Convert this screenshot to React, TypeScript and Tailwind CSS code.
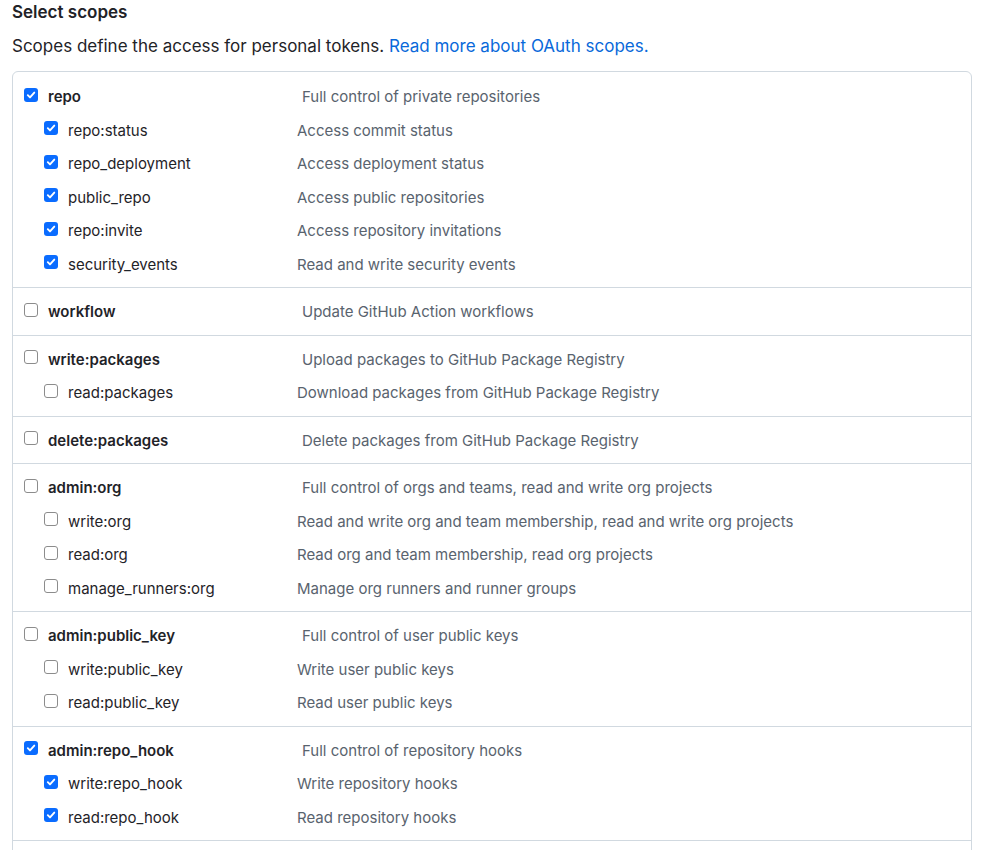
import React from "react";

interface Scope {
  name: string;
  desc: string;
  checked: boolean;
}

interface ScopeGroup {
  parent: Scope;
  children: Scope[];
}

const groups: ScopeGroup[] = [
  {
    parent: { name: "repo", desc: "Full control of private repositories", checked: true },
    children: [
      { name: "repo:status", desc: "Access commit status", checked: true },
      { name: "repo_deployment", desc: "Access deployment status", checked: true },
      { name: "public_repo", desc: "Access public repositories", checked: true },
      { name: "repo:invite", desc: "Access repository invitations", checked: true },
      { name: "security_events", desc: "Read and write security events", checked: true },
    ],
  },
  {
    parent: { name: "workflow", desc: "Update GitHub Action workflows", checked: false },
    children: [],
  },
  {
    parent: { name: "write:packages", desc: "Upload packages to GitHub Package Registry", checked: false },
    children: [{ name: "read:packages", desc: "Download packages from GitHub Package Registry", checked: false }],
  },
  {
    parent: { name: "delete:packages", desc: "Delete packages from GitHub Package Registry", checked: false },
    children: [],
  },
  {
    parent: { name: "admin:org", desc: "Full control of orgs and teams, read and write org projects", checked: false },
    children: [
      { name: "write:org", desc: "Read and write org and team membership, read and write org projects", checked: false },
      { name: "read:org", desc: "Read org and team membership, read org projects", checked: false },
      { name: "manage_runners:org", desc: "Manage org runners and runner groups", checked: false },
    ],
  },
  {
    parent: { name: "admin:public_key", desc: "Full control of user public keys", checked: false },
    children: [
      { name: "write:public_key", desc: "Write user public keys", checked: false },
      { name: "read:public_key", desc: "Read user public keys", checked: false },
    ],
  },
  {
    parent: { name: "admin:repo_hook", desc: "Full control of repository hooks", checked: true },
    children: [
      { name: "write:repo_hook", desc: "Write repository hooks", checked: true },
      { name: "read:repo_hook", desc: "Read repository hooks", checked: true },
    ],
  },
  {
    parent: { name: "admin:org_hook", desc: "Full control of organization hooks", checked: false },
    children: [],
  },
  {
    parent: { name: "gist", desc: "Create gists", checked: false },
    children: [],
  },
];

function Checkbox({ checked }: { checked: boolean }) {
  if (checked) {
    return (
      <span className="flex h-[14px] w-[14px] shrink-0 items-center justify-center rounded-[3px] bg-[#0a6cff]">
        <svg width="10" height="10" viewBox="0 0 10 10" fill="none">
          <path d="M1.8 5.2 L4 7.4 L8.3 2.6" stroke="white" strokeWidth="1.9" strokeLinecap="round" strokeLinejoin="round" />
        </svg>
      </span>
    );
  }
  return <span className="block h-[14px] w-[14px] shrink-0 rounded-[3px] border border-[#8c8c8c] bg-white" />;
}

function ScopeRow({ scope, child }: { scope: Scope; child?: boolean }) {
  return (
    <div className={`flex h-[33.5px] items-center ${child ? "pl-[31px]" : "pl-[11px]"}`}>
      <span className="-mt-[5px]">
        <Checkbox checked={scope.checked} />
      </span>
      <span
        className={`ml-[10px] shrink-0 ${child ? "w-[229px] font-normal" : "w-[254px] font-semibold"} text-[#1f2328]`}
      >
        {scope.name}
      </span>
      <span className="text-[#59636e]">{scope.desc}</span>
    </div>
  );
}

export default function App() {
  return (
    <div className="bg-white pl-[12px] pr-[9px] text-[15px]" style={{ fontFamily: "Inter, 'Noto Sans', sans-serif" }}>
      <h3 className="text-[17px] font-semibold leading-[24px] text-[#1f2328]">Select scopes</h3>
      <p className="mt-[10px] text-[17px] leading-[24px] text-[#1f2328]">
        Scopes define the access for personal tokens.{" "}
        <a href="#" className="text-[#0969da]">
          Read more about OAuth scopes.
        </a>
      </p>
      <div className="mt-[13px] overflow-hidden rounded-[6px] border border-[#d1d9e0]">
        {groups.map((g, i) => (
          <div
            key={g.parent.name}
            className={`pb-[5.5px] ${i > 0 ? "border-t border-[#d1d9e0] pt-[7.5px]" : "pt-[8.5px]"}`}
          >
            <ScopeRow scope={g.parent} />
            {g.children.map((c) => (
              <ScopeRow key={c.name} scope={c} child />
            ))}
          </div>
        ))}
      </div>
    </div>
  );
}
